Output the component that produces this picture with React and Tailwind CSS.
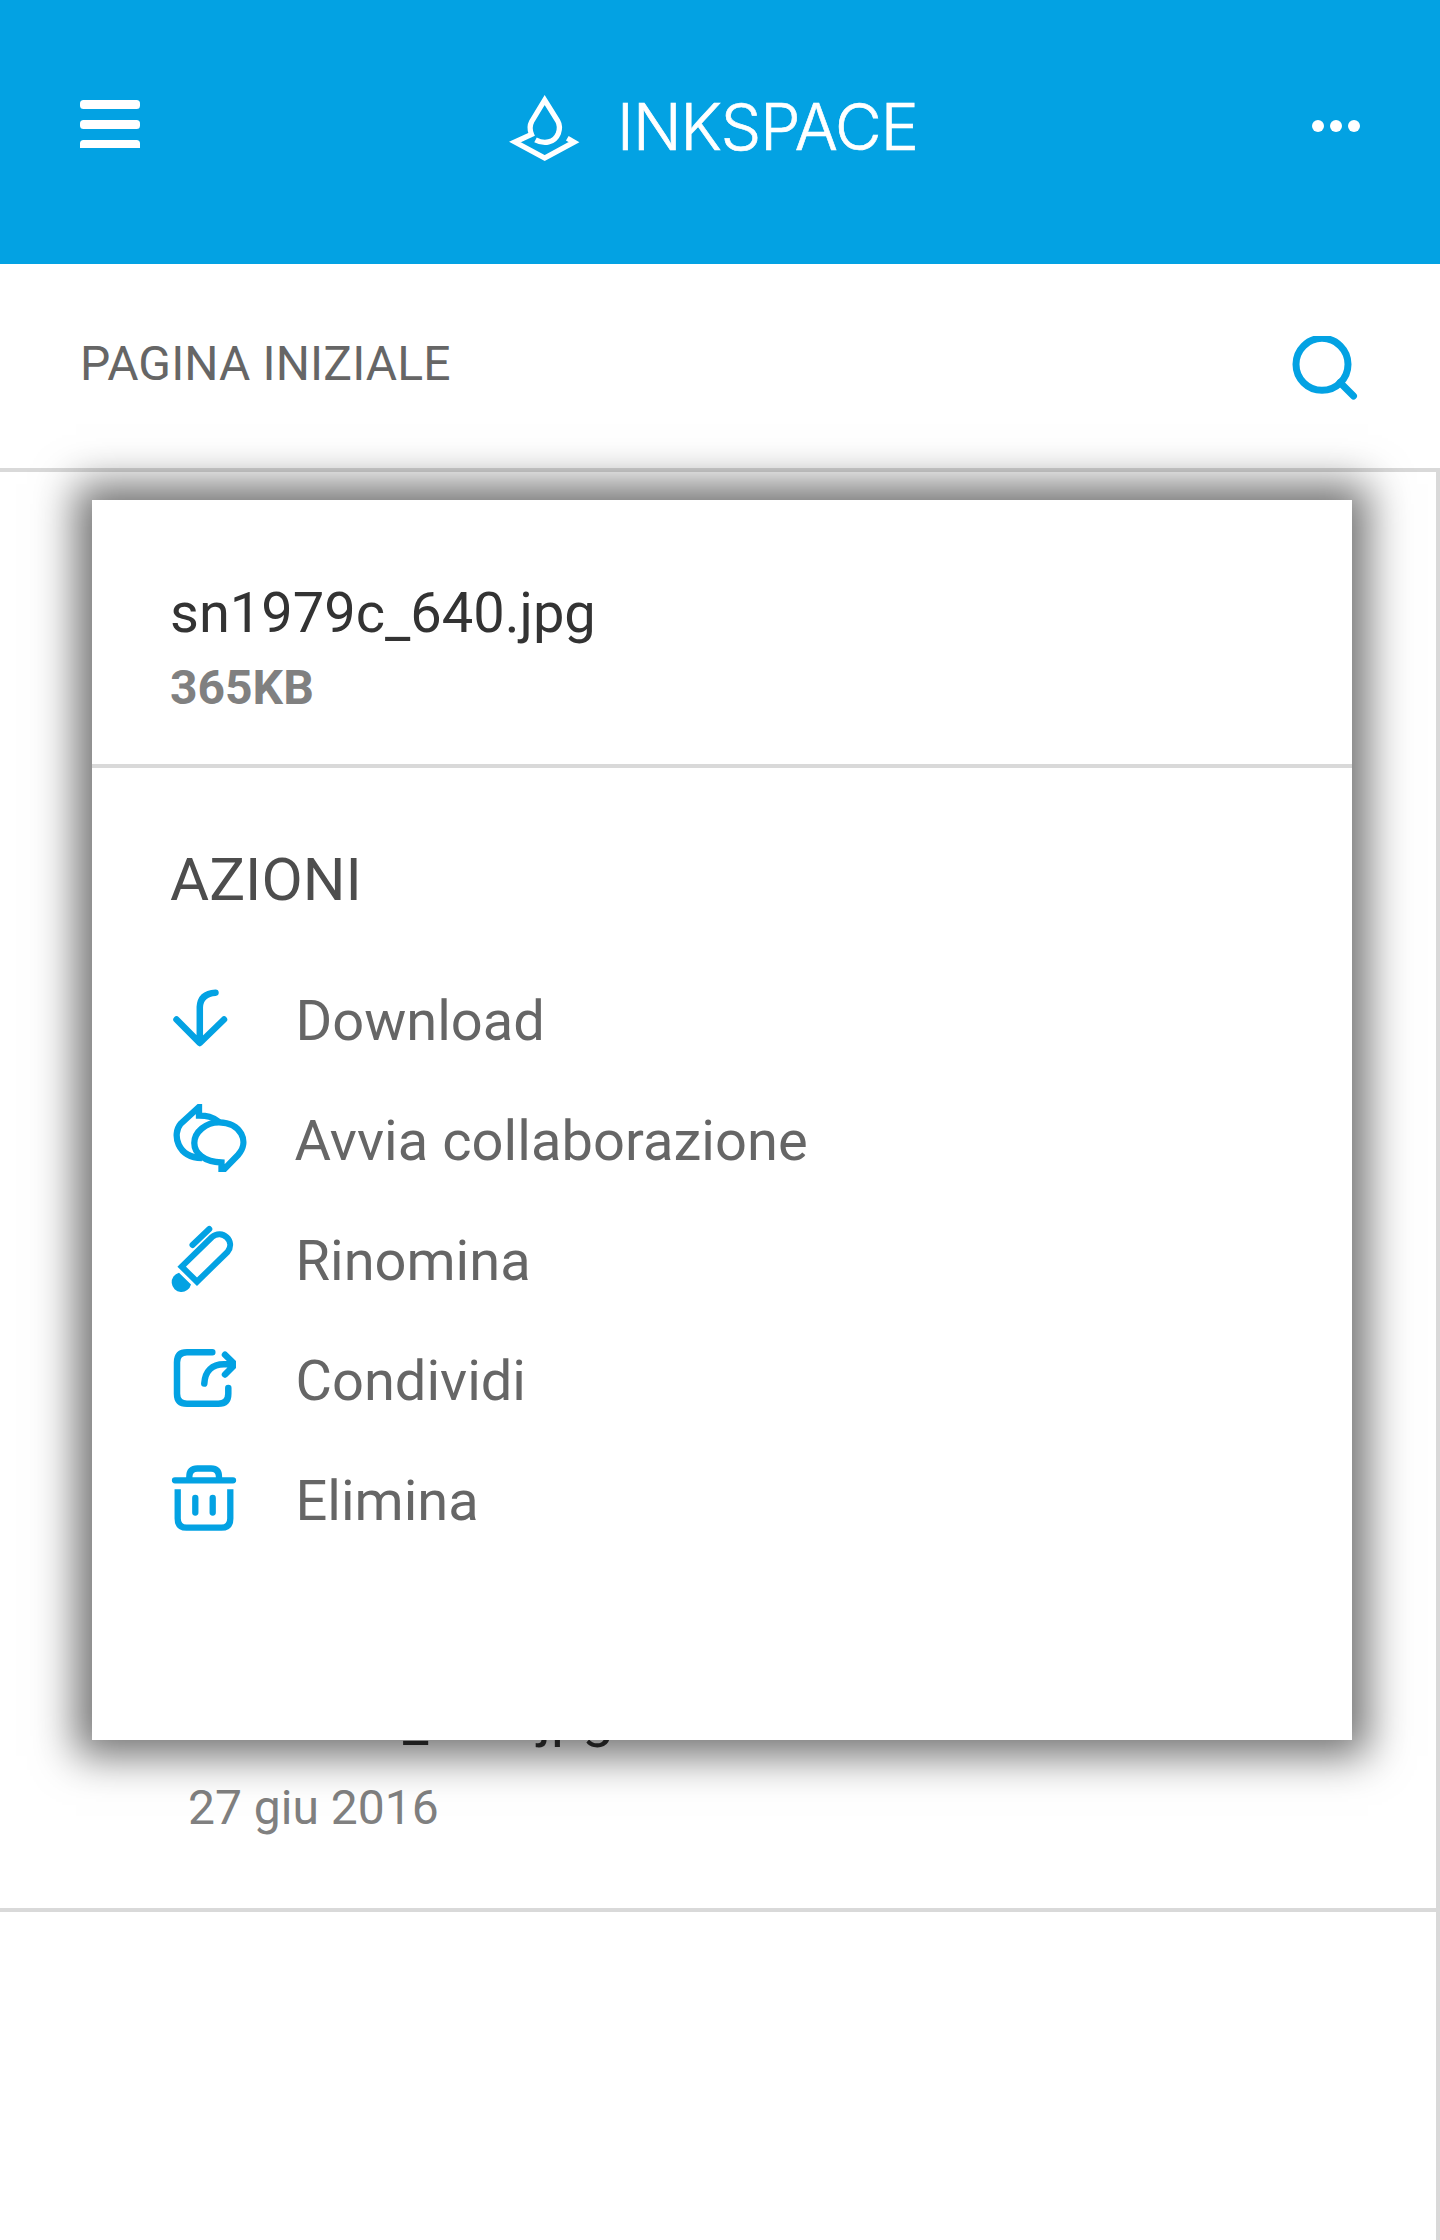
const BLUE = '#03a2e3';

function MenuIcon() {
  return (
    <svg width="60" height="50" viewBox="0 0 60 50" fill="#fff">
      <rect x="0" y="0" width="60" height="9" rx="3.5" />
      <rect x="0" y="20" width="60" height="9" rx="3.5" />
      <path d="M0 48V43.500a3.500 3.500 0 0 1 3.500-3.500h53a3.500 3.500 0 0 1 3.500 3.500V48z" />
    </svg>
  );
}

function DropIcon() {
  return (
    <svg className="overflow-visible" width="72" height="70" viewBox="0 0 72 70" fill="none" stroke="#fff" strokeWidth="5.300">
      <path d="M26.500 43.800C35 48.300 45.500 47 49.300 37.500C51.300 32 50.500 28 48.500 24.500L35.700 4L22.700 25.500C20.300 30 20.300 33 22.500 38.500L6 46L35.700 62L65 46.200L58.300 42.300" />
    </svg>
  );
}

function SearchIcon() {
  return (
    <svg width="68" height="66" viewBox="0 0 68 66" fill="none" stroke={BLUE} strokeWidth="7" strokeLinecap="round">
      <circle cx="30" cy="28.300" r="26" />
      <path d="M48 46.500L61.500 60" />
    </svg>
  );
}

function IconFrame({ children }) {
  return (
    <svg className="shrink-0 overflow-visible" width="76" height="72" viewBox="0 0 76 72" fill="none" stroke={BLUE} strokeWidth="6.500" strokeLinecap="round" strokeLinejoin="round">
      {children}
    </svg>
  );
}

function FileName() {
  return (
    <>
      sn1979c<span className="align-[-5px] leading-none">_</span>640.jpg
    </>
  );
}

const actions = [
  {
    label: 'Download',
    icon: <path d="M4.500 34.500L27.800 58L52 34.500M27.800 57V22Q28.500 8.500 43.500 7.700" />,
    text: 'ml-[47.5px]',
  },
  {
    label: 'Avvia collaborazione',
    icon: (
      <svg x="0" y="-1" width="76" height="68" viewBox="0 -1 76 68">
        <g strokeLinecap="butt" strokeLinejoin="miter" strokeWidth="6.300">
          <path d="M49.500 57.500V67L66 50C78 37 69 17.500 47 17.300C34 17.300 22.300 27 22.300 38C22.300 48 32 57 49.500 57.500Z" />
          <path d="M47 17C40 11.500 35 10.700 27 10.700V2L8.500 19C0 29 5 52.500 30 53" />
        </g>
      </svg>
    ),
    text: 'ml-[46.5px] tracking-[0.06px]',
  },
  {
    label: 'Rinomina',
    icon: (
      <g strokeWidth="6" strokeLinejoin="miter">
        <path d="M9.700 41.700L40 12C50 3.500 64 16 55.500 27L25 56.700Z" strokeLinecap="butt" />
        <path d="M20.500 20L37.300 4" />
        <path d="M7 47.700L19 59.500A9.800 9.800 0 1 1 7 47.700Z" fill={BLUE} stroke="none" />
      </g>
    ),
    text: 'ml-[47.5px]',
  },
  {
    label: 'Condividi',
    icon: (
      <svg x="0" y="0" width="64" height="72" viewBox="0 0 64 72">
        <path d="M40.300 7.300H15Q5 7.300 5 17.300V48.700Q5 58.700 15 58.700H46.300Q56.300 58.700 56.300 48.700V43" />
        <path d="M32.300 38.500C33 26 40 19.300 52 19.300H62M53 9.700L63 19.500L53 29.500" />
      </svg>
    ),
    text: 'ml-[47.5px]',
  },
  {
    label: 'Elimina',
    icon: (
      <g strokeWidth="6.300">
        <path d="M3 15.300H61M17.300 15V12Q17.300 3.500 25.500 3.500H39Q47 3.500 47 12V15" />
        <path d="M5.700 24.300V53.500Q5.700 62.700 14.500 62.700H49.500Q58.300 62.700 58.300 53.500V24.300" strokeLinecap="butt" />
        <path d="M23.300 33V47.500M40.700 33V47.500" />
      </g>
    ),
    text: 'ml-[47.5px]',
  },
];

export default function App() {
  return (
    <div className="relative flex h-[2240px] w-[1440px] flex-col overflow-hidden bg-white font-['Roboto',sans-serif]">
      <header className="flex h-[264px] shrink-0 bg-[#03a2e3] px-20">
        <div className="pt-[100px]"><MenuIcon /></div>
        <div className="ml-[369px] flex">
          <div className="pt-[96px]"><DropIcon /></div>
          <span className="ml-[36px] mt-[87px] block h-[80px] whitespace-nowrap font-['Inter',sans-serif] text-[64px] font-light leading-[80px] tracking-[-0.9px] text-white [-webkit-text-stroke:0.7px_white]">INKSPACE</span>
        </div>
        <div className="ml-auto flex gap-1.5 pt-[120px]">
          <i className="size-3 rounded-full bg-white" />
          <i className="size-3 rounded-full bg-white" />
          <i className="size-3 rounded-full bg-white" />
        </div>
      </header>

      <div className="flex h-[208px] shrink-0 justify-between border-b-4 border-[#d9d9d9] px-20">
        <h1 className="pt-[72px] text-[48px] leading-[56px] tracking-[0.12px] text-[#666]">PAGINA INIZIALE</h1>
        <div className="pt-[72px]"><SearchIcon /></div>
      </div>

      <main className="flex grow flex-col border-r-4 border-[#d9d9d9]">
        <div className="flex h-[1440px] shrink-0 flex-col justify-end border-b-4 border-[#d9d9d9] pb-[72px] pl-[188px]">
          <div className="h-16 text-[56px] leading-[64px] text-[#333]"><FileName /></div>
          <div className="mt-[31px] text-[48px] leading-[56px] text-[#808080]">27 giu 2016</div>
        </div>
      </main>

      <section role="dialog" className="absolute left-[92px] top-[500px] h-[1240px] w-[1260px] bg-white shadow-[0_0_40px_16px_rgba(0,0,0,0.56)]">
        <div className="h-[268px] border-b-4 border-[#d9d9d9] pl-[78px] pt-[81px]">
          <h2 className="h-16 text-[56px] leading-[64px] text-[#333]"><FileName /></h2>
          <p className="mt-[15px] text-[48px] font-bold leading-[56px] text-[#808080]">365KB</p>
        </div>
        <h3 className="pl-[78px] pt-[77px] text-[60px] leading-[70px] text-[#4d4d4d]">AZIONI</h3>
        <ul className="mt-[46px] pl-20 text-[56px] leading-[64px] text-[#666]">
          {actions.map((a) => (
            <li key={a.label} className="flex h-[120px] items-center">
              <IconFrame>{a.icon}</IconFrame>
              <span className={a.text}>{a.label}</span>
            </li>
          ))}
        </ul>
      </section>
    </div>
  );
}
